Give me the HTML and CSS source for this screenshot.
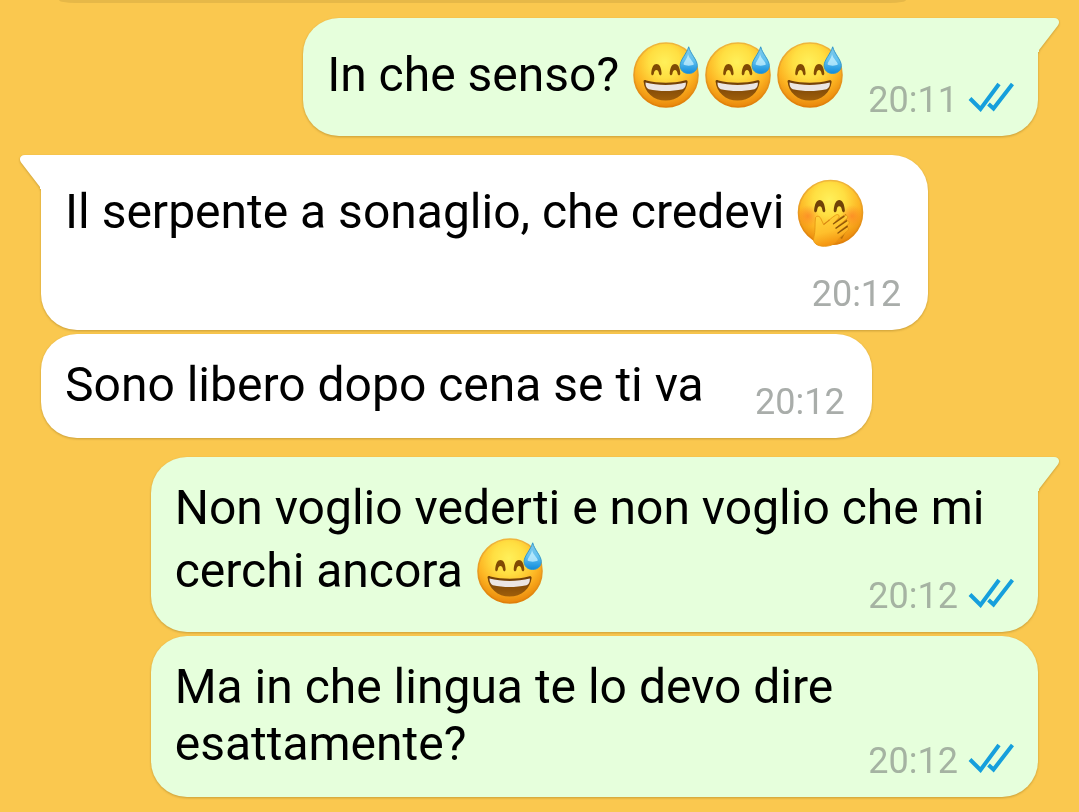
FILE: index.html
```html
<!DOCTYPE html>
<html lang="it">
<head>
  <meta charset="UTF-8">
  <title>Chat</title>
  <meta name="viewport" content="width=device-width, initial-scale=1.0">
  <link rel="stylesheet" href="styles.css">
</head>
<body>
  <!-- shared icons -->
  <svg class="sprite" aria-hidden="true">
    <defs>
      <radialGradient id="skin" cx="0.48" cy="0.3" r="0.7">
        <stop offset="0" stop-color="#fff05a"/>
        <stop offset="0.35" stop-color="#ffdf42"/>
        <stop offset="0.68" stop-color="#fdb523"/>
        <stop offset="1" stop-color="#e9860a"/>
      </radialGradient>
      <linearGradient id="rim" x1="0" y1="0" x2="0" y2="1">
        <stop offset="0" stop-color="#efb63c"/>
        <stop offset="1" stop-color="#e07f08"/>
      </linearGradient>
      <linearGradient id="drop" x1="0" y1="0" x2="0" y2="1">
        <stop offset="0" stop-color="#7fc8e8"/>
        <stop offset="0.5" stop-color="#62c2f0"/>
        <stop offset="1" stop-color="#0f8bdc"/>
      </linearGradient>
      <linearGradient id="mouth" x1="0" y1="0" x2="0" y2="1">
        <stop offset="0" stop-color="#6e3d06"/>
        <stop offset="1" stop-color="#a05f0a"/>
      </linearGradient>
      <linearGradient id="hand" x1="0" y1="0" x2="0.3" y2="1">
        <stop offset="0" stop-color="#ffd63c"/>
        <stop offset="0.6" stop-color="#ffc02c"/>
        <stop offset="1" stop-color="#f4930f"/>
      </linearGradient>
      <radialGradient id="blush">
        <stop offset="0" stop-color="#fb7a24" stop-opacity="0.65"/>
        <stop offset="1" stop-color="#fb7a24" stop-opacity="0"/>
      </radialGradient>
    </defs>
    <symbol id="sweat" viewBox="1 -2 72 71">
      <circle cx="36" cy="33" r="32" fill="url(#skin)" stroke="url(#rim)" stroke-width="1.6"/>
      <path d="M21.2 31.5C21.700 25 23.700 22 26.500 22S31.300 25 31.600 31.500C31.500 34 29.500 33.700 29 31.800C28.600 29.200 27.800 28 26.400 28S24.200 29.200 23.800 31.800C23.300 33.700 21.300 34 21.200 31.500Z" fill="#804a04"/>
      <path d="M39.700 31.500C40.100 25 42.200 22 45 22S49.900 25 50.300 31.500C50.100 34 48.100 33.700 47.600 31.800C47.200 29.200 46.400 28 45 28S42.800 29.200 42.400 31.800C41.900 33.700 39.900 34 39.700 31.500Z" fill="#804a04"/>
      <path d="M13.500 39C14 37.800 15 38 16.500 38.500C28 41.500 44 41.500 54.500 38.500C56.400 37.900 57.600 38 57.600 40C56.500 50.500 47.500 58.600 35.600 58.600S14.500 50.500 13.500 39Z" fill="url(#mouth)"/>
      <path d="M15.500 40.500C27.500 43.700 43.500 43.700 55.800 40.500C56.200 43.500 54.800 46.600 52.500 47.200C41.500 49.600 29.500 49.600 18.800 47.200C16.600 46.400 15.300 43.500 15.500 40.500Z" fill="#ece6e3"/>
      <path d="M58.700 4.800C60.300 11.500 67.300 18 67.300 23.500C67.300 28.200 63.500 31.500 58.600 31.500S50.100 28.200 50.100 23.500C50.100 18 56.800 11.500 58.700 4.800Z" fill="url(#drop)" stroke="#3399cc" stroke-width="1"/>
      <path d="M58 12C57.300 17 53.400 20 53.600 22.500C55.500 24 61.800 24 63.800 22.500C64 20 59.200 17 58 12Z" fill="#c8f2ff" opacity="0.75"/>
    </symbol>
    <symbol id="giggle" viewBox="1 -2 72 71">
      <circle cx="35.5" cy="33.5" r="32" fill="url(#skin)" stroke="url(#rim)" stroke-width="1.6"/>
      <circle cx="13" cy="37" r="11" fill="url(#blush)"/>
      <circle cx="57" cy="37" r="11" fill="url(#blush)"/>
      <path d="M19.100 31.500C19.700 24.500 21.700 21 24.700 21S29.700 24.500 30.300 31.500C30.100 34 28.100 33.700 27.500 31.800C27 28.600 26.200 27.200 24.700 27.200S22.400 28.600 22 31.800C21.400 33.700 19.300 34 19.100 31.500Z" fill="#704208"/>
      <path d="M38.700 31.500C39.200 24.500 41.200 21 44.200 21S49.300 24.500 49.900 31.500C49.700 34 47.700 33.700 47.100 31.800C46.600 28.600 45.800 27.200 44.200 27.200S42 28.600 41.600 31.800C41 33.700 38.900 34 38.700 31.500Z" fill="#704208"/>
      <path d="M39 42L51 35L53 48L47 60L39 56Z" fill="#a96408" opacity="0.8"/>
      <path d="M20.500 38.500C22.500 36 25.200 37.600 26 40L28.600 45.500C32 43.500 36 39 40.500 36.200C43.500 34.400 45.300 37 43.200 39.400L39.500 43.500L49.500 36.600C52.300 35.200 53.800 38 51.700 40L42.800 47.300L51.500 42C54 41 55.200 43.800 53.200 45.600L44.600 52L51 48.500C53.400 47.600 54.400 50.200 52.600 51.800L44.500 59C41.500 63 37.500 67.300 29.500 67.300C22 67.300 17.200 63.800 18.800 58.500C20.600 52.500 19.600 44 20.500 38.500Z" fill="url(#hand)" stroke="#e79513" stroke-width="0.9"/>
      <path d="M28.600 45.500C30.600 44.300 32.500 42.500 34.500 40.800" fill="none" stroke="#d88714" stroke-width="1.2"/>
      <path d="M38.500 44.800L49 37.400M41 49.200L51.500 42M43 54L52 47.600" fill="none" stroke="#8f5608" stroke-width="1.4" stroke-linecap="round"/>
    </symbol>
    <symbol id="read" viewBox="0 0 46 30">
      <path d="M2 16.500L12.500 27L31 2M20.500 22L25.500 26.500L44.500 2" fill="none" stroke="#169fdc" stroke-width="4"/>
    </symbol>
    <symbol id="tail" viewBox="0 0 22 34">
      <path d="M0 0H16C21 0 22.500 4 19.500 8L1 32V34H0Z"/>
    </symbol>
  </svg>

  <main class="chat">
    <div class="previous"></div>

    <div class="group sent">
      <div class="bubble first">
        <svg class="tail" aria-hidden="true"><use href="#tail"/></svg>
        <p>In che senso? <svg class="emoji" role="img" aria-label="😅"><use href="#sweat"/></svg><svg class="emoji" role="img" aria-label="😅"><use href="#sweat"/></svg><svg class="emoji" role="img" aria-label="😅"><use href="#sweat"/></svg><span class="spacer"></span></p>
        <div class="meta"><time>20:11</time><svg class="ticks" role="img" aria-label="Letto"><use href="#read"/></svg></div>
      </div>
    </div>

    <div class="group received">
      <div class="bubble first">
        <svg class="tail" aria-hidden="true"><use href="#tail"/></svg>
        <p>Il serpente a sonaglio, che credevi <svg class="emoji" role="img" aria-label="🤭"><use href="#giggle"/></svg><span class="spacer"></span></p>
        <div class="meta"><time>20:12</time></div>
      </div>
      <div class="bubble">
        <p>Sono libero dopo cena se ti va<span class="spacer"></span></p>
        <div class="meta"><time>20:12</time></div>
      </div>
    </div>

    <div class="group sent">
      <div class="bubble first">
        <svg class="tail" aria-hidden="true"><use href="#tail"/></svg>
        <p>Non voglio vederti e non voglio che mi cerchi ancora <svg class="emoji" role="img" aria-label="😅"><use href="#sweat"/></svg><span class="spacer"></span></p>
        <div class="meta"><time>20:12</time><svg class="ticks" role="img" aria-label="Letto"><use href="#read"/></svg></div>
      </div>
      <div class="bubble">
        <p>Ma in che lingua te lo devo dire esattamente?<span class="spacer"></span></p>
        <div class="meta"><time>20:12</time><svg class="ticks" role="img" aria-label="Letto"><use href="#read"/></svg></div>
      </div>
    </div>
  </main>
</body>
</html>
```
FILE: styles.css
```css
* {
  box-sizing: border-box;
}
body {
  margin: 0;
  background: #fac84f;
  color: #000;
  font-family: Roboto, sans-serif;
}
.sprite {
  position: absolute;
  width: 0;
  height: 0;
}
.chat {
  display: flex;
  flex-direction: column;
  padding: 0 41px 14px;
}
/* lower edge of the message scrolled out of view */
.previous {
  width: 85%;
  height: 3px;
  margin-left: 18px;
  background: #e6b848;
  border-radius: 0 0 16px 16px / 0 0 3px 3px;
}
.group {
  display: flex;
  flex-direction: column;
  gap: 4px;
  margin-top: 19px;
}
.previous + .group {
  margin-top: 15px;
}
.sent {
  align-items: flex-end;
}
.received {
  align-items: flex-start;
}
.bubble {
  position: relative;
  max-width: 89%;
  padding: 22px 24px 25px;
  border-radius: 36px;
  filter: drop-shadow(0 1px 1px rgba(90, 60, 0, 0.3));
}
.sent .bubble {
  background: #e6ffdc;
}
.received .bubble {
  background: #fff;
}
.sent .first {
  border-top-right-radius: 0;
}
.received .first {
  border-top-left-radius: 0;
}
.bubble p {
  margin: 0;
  font-size: 48px;
  line-height: 57px;
}
.emoji {
  width: 72px;
  height: 71px;
  vertical-align: -20px;
}
/* keeps room for the time at the end of the last line */
.spacer {
  display: inline-block;
  width: 144px;
  height: 1px;
}
.sent .spacer {
  width: 167px;
}
.meta {
  position: absolute;
  right: 27px;
  bottom: 15px;
  display: flex;
  align-items: flex-start;
  gap: 10px;
  color: #a9adaa;
  font-size: 36px;
  line-height: 42px;
}
.sent .meta {
  right: 24px;
  color: #a5b3a2;
}
.ticks {
  width: 46px;
  height: 30px;
  margin-top: 3px;
}
.tail {
  position: absolute;
  top: 0;
  left: 100%;
  width: 22px;
  height: 34px;
  fill: #e6ffdc;
}
.received .tail {
  left: auto;
  right: 100%;
  fill: #fff;
  transform: scaleX(-1);
}
```
